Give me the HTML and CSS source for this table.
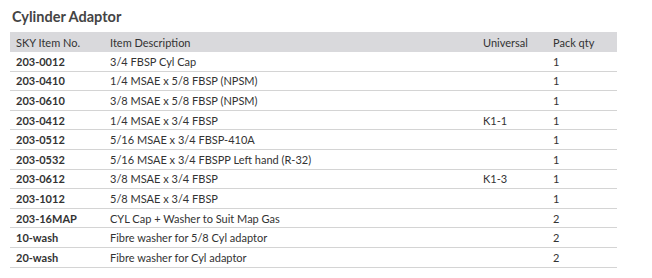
FILE: index.html
```html
<!DOCTYPE html>
<html lang="en">
<head>
    <meta charset="UTF-8">
    <meta name="viewport" content="width=device-width, initial-scale=1.0">
    <title>Cylinder Adaptor</title>
    <link rel="stylesheet" href="styles.css">
</head>
<body>
    <!-- Таблица переходников -->
    <div class="productBlock">
        <h2 class="productTitle">Cylinder Adaptor</h2>
        <table class="productTable">
            <thead>
                <tr>
                    <th class="colSku">SKY Item No.</th>
                    <th class="colDesc">Item Description</th>
                    <th class="colUni">Universal</th>
                    <th class="colQty">Pack qty</th>
                </tr>
            </thead>
            <tbody>
                <tr><td class="sku">203-0012</td><td>3/4 FBSP Cyl Cap</td><td></td><td>1</td></tr>
                <tr><td class="sku">203-0410</td><td>1/4 MSAE x 5/8 FBSP (NPSM)</td><td></td><td>1</td></tr>
                <tr><td class="sku">203-0610</td><td>3/8 MSAE x 5/8 FBSP (NPSM)</td><td></td><td>1</td></tr>
                <tr><td class="sku">203-0412</td><td>1/4 MSAE x 3/4 FBSP</td><td>K1-1</td><td>1</td></tr>
                <tr><td class="sku">203-0512</td><td>5/16 MSAE x 3/4 FBSP-410A</td><td></td><td>1</td></tr>
                <tr><td class="sku">203-0532</td><td>5/16 MSAE x 3/4 FBSPP Left hand (R-32)</td><td></td><td>1</td></tr>
                <tr><td class="sku">203-0612</td><td>3/8 MSAE x 3/4 FBSP</td><td>K1-3</td><td>1</td></tr>
                <tr><td class="sku">203-1012</td><td>5/8 MSAE x 3/4 FBSP</td><td></td><td>1</td></tr>
                <tr><td class="sku">203-16MAP</td><td>CYL Cap + Washer to Suit Map Gas</td><td></td><td>2</td></tr>
                <tr><td class="sku">10-wash</td><td>Fibre washer for 5/8 Cyl adaptor</td><td></td><td>2</td></tr>
                <tr><td class="sku">20-wash</td><td>Fibre washer for Cyl adaptor</td><td></td><td>2</td></tr>
            </tbody>
        </table>
    </div>
</body>
</html>
```

FILE: styles.css
```css
/* Основной стиль */
body {
    font-family: Lato, "Open Sans", sans-serif;
    background-color: #fff;
    color: #333;
    margin: 0;
    padding: 0;
}

.productBlock {
    padding: 8px 35px 0 10px;
}

.productTitle {
    margin: 0 0 6px 2px;
    font-size: 14.5px;
    line-height: 18px;
    font-weight: 700;
    color: #444;
}

/* Стили для таблицы */
.productTable {
    width: 100%;
    border-collapse: collapse;
    font-size: 11px;
}

.productTable th {
    background-color: #d9d9dc;
    font-weight: normal;
    text-align: left;
    height: 20px;
    padding: 0 0 0 6px;
}

.productTable td {
    height: 18.6px;
    padding: 0 0 0 6px;
    border-bottom: 1px solid #d4d4d4;
}

.productTable .sku {
    font-weight: 700;
}

.colSku { width: 88px; }
.colUni { width: 64px; }
.colQty { width: 64px; }
```
